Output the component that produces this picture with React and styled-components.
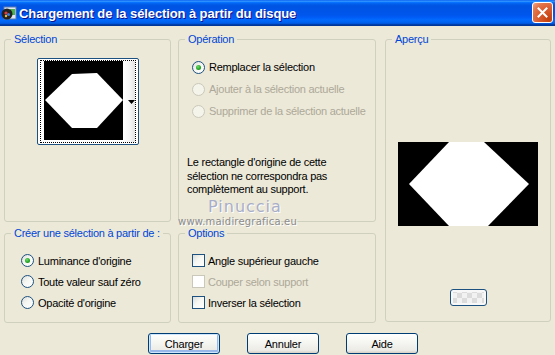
import React from 'react'
import styled, { createGlobalStyle } from 'styled-components'

const GlobalStyle = createGlobalStyle`
  html, body {
    margin: 0;
    padding: 0;
    background: #ece9d8;
  }
  body {
    font-family: "Liberation Sans", Arial, sans-serif;
    font-size: 11px;
    letter-spacing: -0.25px;
  }
`

const Window = styled.div`
  position: relative;
  width: 555px;
  height: 355px;
  background: #ece9d8;
  display: flex;
  flex-direction: column;
  overflow: hidden;
`

const TitleBar = styled.div`
  height: 26px;
  display: flex;
  align-items: center;
  padding: 0 2px 0 1px;
  background: linear-gradient(
    180deg,
    #0058ee 0%,
    #3593ff 4%,
    #288eff 6%,
    #127dff 8%,
    #036ffc 10%,
    #0262ee 14%,
    #0057e5 20%,
    #0054e3 24%,
    #0055eb 56%,
    #005bf5 66%,
    #026afe 76%,
    #0062ef 86%,
    #0052d6 92%,
    #0040ab 94%,
    #003092 100%
  );
`

const TitleText = styled.span`
  flex: 1;
  margin-left: 2px;
  color: #fff;
  font-family: "Liberation Sans", Arial, sans-serif;
  font-weight: bold;
  font-size: 13px;
  letter-spacing: -0.1px;
  text-shadow: 1px 1px 0 #0f1089;
`

const CloseButton = styled.div`
  width: 19px;
  height: 19px;
  margin-top: -1px;
  border: 1px solid #fff;
  border-radius: 3px;
  background: radial-gradient(circle at 85% 85%, #c2400f 0%, #d95b2e 45%, #e2764d 75%, #f2a58a 100%);
  display: flex;
  align-items: center;
  justify-content: center;
`

const Body = styled.div`
  display: grid;
  grid-template-columns: 167px 198px 168px;
  grid-template-rows: 189px 96px;
  column-gap: 7px;
  row-gap: 5px;
  padding: 7px 0 0 4px;
`

const Group = styled.fieldset`
  margin: 0;
  padding: 0;
  min-width: 0;
  border: 1px solid #d0d0bf;
  border-radius: 3px;
  grid-column: ${p => p.$col || 'auto'};
  grid-row: ${p => p.$row || 'auto'};
  margin-left: ${p => p.$shift || 0}px;
  height: ${p => p.$height ? p.$height + 'px' : 'auto'};
  box-sizing: border-box;
`

const Legend = styled.legend`
  margin-left: 6px;
  padding: 0 3px;
  color: #0046d5;
  font-size: 11px;
  line-height: 13px;
  white-space: nowrap;
`

const GroupContent = styled.div`
  display: flex;
  flex-direction: column;
  align-items: ${p => p.$center ? 'center' : 'flex-start'};
  padding: ${p => p.$pad};
`

const Combo = styled.div`
  width: 102px;
  height: 87px;
  box-sizing: border-box;
  border: 1px solid #1c5180;
  border-radius: 2px;
  padding: 1px 2px;
  background: #fff;
  display: flex;
`

const FocusRect = styled.div`
  flex: 1;
  display: flex;
  align-items: flex-start;
  border: 1px dotted #000;
  padding: 0 0 0 3px;
`

const Thumb = styled.div`
  width: 79px;
  height: 79px;
  flex-shrink: 0;
  background: #000;
`

const ComboArrow = styled.div`
  flex: 1;
  align-self: stretch;
  display: flex;
  align-items: center;
  justify-content: flex-end;
  background: linear-gradient(90deg, #fff 0%, #f4f4f4 60%, #e4e4e4 100%);
`

const Row = styled.label`
  display: flex;
  align-items: center;
  height: ${p => p.$h || 22}px;
  gap: ${p => p.$gap || 4}px;
  color: ${p => p.$disabled ? '#aca899' : '#000'};
  white-space: nowrap;
`

const Radio = styled.span`
  width: 13px;
  height: 13px;
  box-sizing: border-box;
  border-radius: 50%;
  border: 1px solid ${p => p.$disabled ? '#cac8bb' : '#1c5180'};
  background: ${p => p.$disabled
    ? '#f5f4ea'
    : 'linear-gradient(135deg, #dcdcd7 0%, #f6f6f3 45%, #ffffff 100%)'};
  display: flex;
  align-items: center;
  justify-content: center;
  &::after {
    content: '';
    display: ${p => p.$checked ? 'block' : 'none'};
    width: 5px;
    height: 5px;
    border-radius: 50%;
    background: radial-gradient(circle at 40% 35%, #6ddc6d 0%, #21a121 60%, #138a13 100%);
  }
`

const Check = styled.span`
  width: 13px;
  height: 13px;
  box-sizing: border-box;
  border: 1px solid ${p => p.$disabled ? '#cac8bb' : '#1c5180'};
  background: ${p => p.$disabled
    ? '#fff'
    : 'linear-gradient(135deg, #dcdcd7 0%, #f6f6f3 45%, #ffffff 100%)'};
`

const Note = styled.p`
  margin: 34px 0 0 -5px;
  line-height: 13.5px;
  color: #000;
`

const Preview = styled.div`
  margin-top: 96px;
  width: 140px;
  height: 84px;
  background: #000;
`

const SmallButton = styled.div`
  margin-top: 63px;
  width: 37px;
  height: 17px;
  box-sizing: border-box;
  border: 1px solid #1c5180;
  border-radius: 3px;
  background:
    repeating-conic-gradient(#f2f2f2 0% 25%, #dcdcdc 0% 50%) 6px 3px / 10px 10px,
    #eee;
  box-shadow: inset 0 0 0 2px #f8f8f8;
`

const ButtonRow = styled.div`
  display: flex;
  gap: 27px;
  padding: 10px 0 0 148px;
`

const Button = styled.button`
  width: 72px;
  height: 21px;
  padding: 0;
  border: 1px solid #003c74;
  border-radius: 3px;
  background: linear-gradient(180deg, #ffffff 0%, #f4f4f0 50%, #ecebe6 86%, #d6d0c5 100%);
  font-family: "Liberation Sans", Arial, sans-serif;
  font-size: 11px;
  letter-spacing: -0.2px;
  color: #000;
  box-shadow: ${p => p.$default ? 'inset 0 0 0 1px #cee7ff, inset 0 -1px 0 2px #98b8ea' : 'none'};
`

const Watermark = styled.div`
  position: absolute;
  left: 178px;
  top: 199px;
  display: flex;
  flex-direction: column;
  align-items: flex-start;
  pointer-events: none;
`

const WatermarkName = styled.span`
  margin-left: 30px;
  font-family: "DejaVu Sans", sans-serif;
  font-size: 16px;
  letter-spacing: 1px;
  color: #a9aec8;
  text-shadow: 1px 1px 0 #fff;
  line-height: 16px;
`

const WatermarkUrl = styled.span`
  margin-top: 1px;
  font-family: "DejaVu Sans", sans-serif;
  font-size: 10px;
  letter-spacing: 0.2px;
  color: #8c8c8c;
  text-shadow: 1px 1px 0 #fff;
  line-height: 12px;
`

const AppIcon = () => (
  <svg width="16" height="16" viewBox="0 0 16 16">
    <rect x="3" y="2" width="12" height="12" fill="#dfe8f4" stroke="#5a7bb0" />
    <rect x="9" y="4" width="5" height="6" fill="#4caf50" />
    <circle cx="6" cy="9" r="5.5" fill="#222" />
    <circle cx="5" cy="8" r="1.6" fill="#e03a3a" />
    <circle cx="7.5" cy="9.5" r="1.5" fill="#3a7de0" />
    <circle cx="5" cy="11" r="1.2" fill="#f0c030" />
  </svg>
)

const CloseIcon = () => (
  <svg width="11" height="11" viewBox="0 0 11 11">
    <path d="M1.5 1.5 L9.5 9.5 M9.5 1.5 L1.5 9.5" stroke="#fff" strokeWidth="2" strokeLinecap="square" />
  </svg>
)

const ThumbShape = () => (
  <svg width="79" height="79" viewBox="0 0 79 79">
    <polygon points="1,39 28,13 53,12 79,39 53,67 28,67" fill="#fff" />
  </svg>
)

const PreviewShape = () => (
  <svg width="140" height="84" viewBox="0 0 140 84">
    <polygon points="11,42 51,0 86,0 131,42 90,84 51,84" fill="#fff" />
  </svg>
)

const DownArrow = () => (
  <svg width="7" height="4" viewBox="0 0 7 4">
    <polygon points="0,0 7,0 3.5,4" fill="#000" />
  </svg>
)

export default function App() {
  return (
    <Window>
      <GlobalStyle />
      <TitleBar>
        <AppIcon />
        <TitleText>Chargement de la sélection à partir du disque</TitleText>
        <CloseButton>
          <CloseIcon />
        </CloseButton>
      </TitleBar>

      <Body>
        <Group $col="1" $row="1">
          <Legend>Sélection</Legend>
          <GroupContent $center $pad="12px 0 0">
            <Combo>
              <FocusRect>
                <Thumb>
                  <ThumbShape />
                </Thumb>
                <ComboArrow>
                  <DownArrow />
                </ComboArrow>
              </FocusRect>
            </Combo>
          </GroupContent>
        </Group>

        <Group $col="2" $row="1">
          <Legend>Opération</Legend>
          <GroupContent $pad="10px 0 0 13px">
            <Row>
              <Radio $checked />
              Remplacer la sélection
            </Row>
            <Row $disabled>
              <Radio $disabled />
              Ajouter à la sélection actuelle
            </Row>
            <Row $disabled>
              <Radio $disabled />
              Supprimer de la sélection actuelle
            </Row>
            <Note>
              Le rectangle d'origine de cette
              <br />
              sélection ne correspondra pas
              <br />
              complètement au support.
            </Note>
          </GroupContent>
        </Group>

        <Group $col="3" $row="1 / span 2" $shift={2} $height={289}>
          <Legend>Aperçu</Legend>
          <GroupContent $center $pad="0">
            <Preview>
              <PreviewShape />
            </Preview>
            <SmallButton />
          </GroupContent>
        </Group>

        <Group $col="1" $row="2">
          <Legend>Créer une sélection à partir de :</Legend>
          <GroupContent $pad="10px 0 0 16px">
            <Row $h={21}>
              <Radio $checked />
              Luminance d'origine
            </Row>
            <Row $h={21}>
              <Radio />
              Toute valeur sauf zéro
            </Row>
            <Row $h={21}>
              <Radio />
              Opacité d'origine
            </Row>
          </GroupContent>
        </Group>

        <Group $col="2" $row="2">
          <Legend>Options</Legend>
          <GroupContent $pad="10px 0 0 13px">
            <Row $h={21} $gap={3}>
              <Check />
              Angle supérieur gauche
            </Row>
            <Row $h={21} $gap={3} $disabled>
              <Check $disabled />
              Couper selon support
            </Row>
            <Row $h={21} $gap={3}>
              <Check />
              Inverser la sélection
            </Row>
          </GroupContent>
        </Group>
      </Body>

      <ButtonRow>
        <Button $default>Charger</Button>
        <Button>Annuler</Button>
        <Button>Aide</Button>
      </ButtonRow>

      <Watermark>
        <WatermarkName>Pinuccia</WatermarkName>
        <WatermarkUrl>www.maidiregrafica.eu</WatermarkUrl>
      </Watermark>
    </Window>
  )
}
